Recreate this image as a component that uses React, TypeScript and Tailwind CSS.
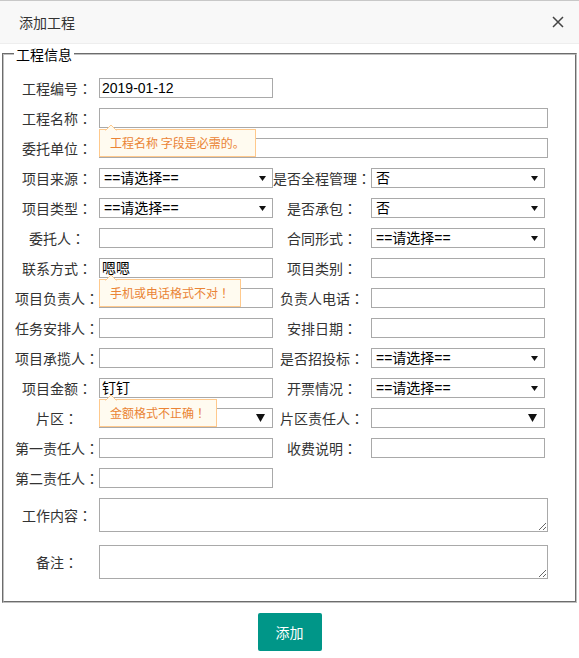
import React from "react";

const FONT = '"Noto Sans CJK SC", "Noto Sans", sans-serif';
const INPUT_FONT = '"Liberation Sans", "Noto Sans CJK SC", sans-serif';
const COLON_FONT = '"Noto Sans CJK JP", "Noto Sans CJK SC", sans-serif';

function Caret() {
  return (
    <svg
      className="absolute left-[5px] top-[-6px]"
      width="12"
      height="7"
      viewBox="0 0 12 7"
    >
      <path d="M0 7 L6 1 L12 7 Z" fill="#fffbf0" />
      <path d="M0.5 6.5 L6 1 L11.5 6.5" fill="none" stroke="#ffc98c" strokeWidth="1" />
    </svg>
  );
}

function Tip({ text }: { text: string }) {
  const last = text.slice(-1);
  const isBang = last === "！";
  return (
    <div className="absolute left-0 top-[21px] z-10 h-[28px] whitespace-nowrap border border-[#ffc98c] bg-[#fffbf0] px-[10px] text-[12px] leading-[26px] text-[#ea8435]">
      <Caret />
      {isBang ? text.slice(0, -1) : text}
      {isBang ? <span style={{ fontFamily: COLON_FONT }}>！</span> : null}
    </div>
  );
}

function Label({ text, wide }: { text: string; wide?: boolean }) {
  const body = text.slice(0, -1);
  return (
    <div
      className={
        (wide ? "w-[98px]" : "w-[84px]") +
        " shrink-0 whitespace-nowrap text-center text-[14px] text-[#333]"
      }
    >
      {body}
      <span style={{ fontFamily: COLON_FONT }}>：</span>
    </div>
  );
}

function TextInput({
  value,
  full,
  tip,
}: {
  value?: string;
  full?: boolean;
  tip?: string;
}) {
  return (
    <div className={(full ? "w-[449px]" : "w-[174px]") + " relative shrink-0"}>
      <input
        type="text"
        defaultValue={value ?? ""}
        className="box-border block h-[20px] w-full border border-[#a9a9a9] bg-white px-[2px] text-[14px] text-black outline-none"
        style={{ fontFamily: INPUT_FONT }}
      />
      {tip ? <Tip text={tip} /> : null}
    </div>
  );
}

function Select({ value, big }: { value?: string; big?: boolean }) {
  return (
    <div
      className="box-border flex h-[20px] w-[174px] shrink-0 items-center justify-between border border-[#a9a9a9] bg-white pl-[4px] text-[14px] text-black"
      style={{ fontFamily: INPUT_FONT }}
    >
      <span className="leading-[18px]">{value ?? ""}</span>
      {big ? (
        <svg className="mr-[7px]" width="9" height="8" viewBox="0 0 9 8">
          <path d="M0 0 H9 L4.5 8 Z" fill="#111" />
        </svg>
      ) : (
        <svg className="mr-[6px]" width="7" height="5" viewBox="0 0 7 5">
          <path d="M0 0 H7 L3.5 5 Z" fill="#111" />
        </svg>
      )}
    </div>
  );
}

function Row({ children }: { children: React.ReactNode }) {
  return <div className="flex h-[30px] items-center">{children}</div>;
}

export default function App() {
  return (
    <div
      className="h-[658px] w-[579px] overflow-hidden bg-white"
      style={{ fontFamily: FONT }}
    >
      <div className="box-border flex h-[44px] items-center justify-between border-t border-b border-t-[#c8c8c8] border-b-[#eeeeee] bg-[#f8f8f8] pl-[19px] pr-[15px]">
        <span className="text-[14px] text-[#333]">添加工程</span>
        <svg width="12" height="12" viewBox="0 0 12 12">
          <path d="M1 1 L11 11 M11 1 L1 11" stroke="#444" strokeWidth="1.5" fill="none" />
        </svg>
      </div>

      <fieldset className="mx-[2px] border-2 border-[#c0c0c0] pl-[11px] pt-[9px] pb-[22px] [border-style:groove]">
        <legend className="ml-[-1px] px-[2px] text-[14px] leading-[20px] text-black">
          工程信息
        </legend>

        <Row>
          <Label text="工程编号：" />
          <TextInput value="2019-01-12" />
        </Row>
        <Row>
          <Label text="工程名称：" />
          <TextInput full tip="工程名称 字段是必需的。" />
        </Row>
        <Row>
          <Label text="委托单位：" />
          <TextInput full />
        </Row>
        <Row>
          <Label text="项目来源：" />
          <Select value="==请选择==" />
          <Label wide text="是否全程管理：" />
          <Select value="否" />
        </Row>
        <Row>
          <Label text="项目类型：" />
          <Select value="==请选择==" />
          <Label wide text="是否承包：" />
          <Select value="否" />
        </Row>
        <Row>
          <Label text="委托人：" />
          <TextInput />
          <Label wide text="合同形式：" />
          <Select value="==请选择==" />
        </Row>
        <Row>
          <Label text="联系方式：" />
          <TextInput value="嗯嗯" tip="手机或电话格式不对！" />
          <Label wide text="项目类别：" />
          <TextInput />
        </Row>
        <Row>
          <Label text="项目负责人：" />
          <TextInput />
          <Label wide text="负责人电话：" />
          <TextInput />
        </Row>
        <Row>
          <Label text="任务安排人：" />
          <TextInput />
          <Label wide text="安排日期：" />
          <TextInput />
        </Row>
        <Row>
          <Label text="项目承揽人：" />
          <TextInput />
          <Label wide text="是否招投标：" />
          <Select value="==请选择==" />
        </Row>
        <Row>
          <Label text="项目金额：" />
          <TextInput value="钉钉" tip="金额格式不正确！" />
          <Label wide text="开票情况：" />
          <Select value="==请选择==" />
        </Row>
        <Row>
          <Label text="片区：" />
          <Select big />
          <Label wide text="片区责任人：" />
          <Select big />
        </Row>
        <Row>
          <Label text="第一责任人：" />
          <TextInput />
          <Label wide text="收费说明：" />
          <TextInput />
        </Row>
        <Row>
          <Label text="第二责任人：" />
          <TextInput />
        </Row>

        <div className="mt-[5px] flex items-center">
          <Label text="工作内容：" />
          <textarea className="box-border block h-[34px] w-[449px] border border-[#a9a9a9] outline-none" />
        </div>
        <div className="mt-[13px] flex items-center">
          <Label text="备注：" />
          <textarea className="box-border block h-[34px] w-[449px] border border-[#a9a9a9] outline-none" />
        </div>
      </fieldset>

      <div className="mt-[10px] flex justify-center">
        <button className="h-[38px] w-[64px] rounded-[2px] bg-[#009688] text-[14px] text-white">
          添加
        </button>
      </div>
    </div>
  );
}
